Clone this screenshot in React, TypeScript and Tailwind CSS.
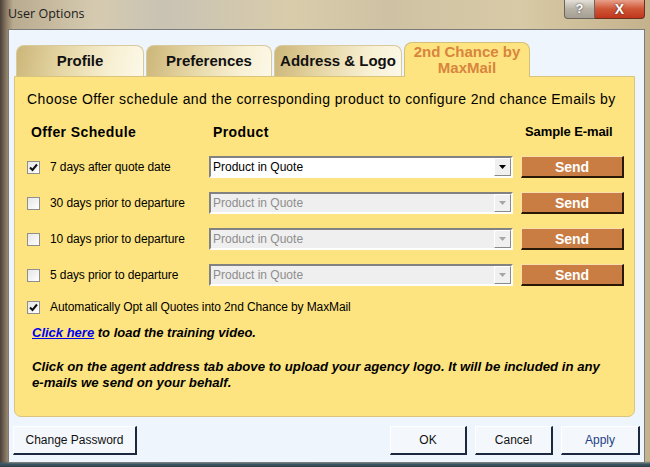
import React from 'react';

const font = "font-['Liberation_Sans',Arial,sans-serif]";

const CheckBox: React.FC<{ checked?: boolean }> = ({ checked }) => (
  <span className="w-[13px] h-[13px] border border-[#8e8f8f] bg-[linear-gradient(135deg,#e6e6e6,#ffffff)] flex items-center justify-center shrink-0">
    {checked && (
      <svg width="9" height="9" viewBox="0 0 9 9">
        <path d="M1 4.5 L3.5 7 L8 1.5" stroke="#111" strokeWidth="2" fill="none" />
      </svg>
    )}
  </span>
);

const ProductSelect: React.FC<{ disabled?: boolean }> = ({ disabled }) => (
  <div
    className={`w-[304px] h-[22px] flex items-center border-2 border-t-[#828282] border-l-[#828282] border-b-[#fdfdfd] border-r-[#fdfdfd] ${
      disabled ? 'bg-[#efefef] text-[#8d8d8d]' : 'bg-white text-black'
    }`}
  >
    <span className="flex-1 pl-[2px] text-[12px] leading-none">Product in Quote</span>
    <span className="w-[17px] h-[18px] flex items-center justify-center bg-[#f0f0f0] border border-t-[#ffffff] border-l-[#ffffff] border-b-[#8a8a8a] border-r-[#8a8a8a]">
      <svg width="7" height="4" viewBox="0 0 7 4">
        <path d="M0 0 H7 L3.5 4 Z" fill={disabled ? '#a6a6a6' : '#000'} />
      </svg>
    </span>
  </div>
);

const SendButton = () => (
  <button className="w-[103px] h-[22px] bg-[#c97d42] border-t border-l border-t-[#f9dfae] border-l-[#f9dfae] border-b-2 border-r-2 border-b-[#2a1806] border-r-[#2a1806] text-white font-bold text-[14px] leading-none">
    Send
  </button>
);

const rows = [
  { label: '7 days after quote date', checked: true },
  { label: '30 days prior to departure', checked: false },
  { label: '10 days prior to departure', checked: false },
  { label: '5 days prior to departure', checked: false },
];

const tabs = ['Profile', 'Preferences', 'Address & Logo'];

const WinButton: React.FC<{ label: string; width: string; blue?: boolean }> = ({ label, width, blue }) => (
  <button
    className={`${width} h-[29px] bg-[#f4f8fc] border-t border-l border-t-[#ffffff] border-l-[#ffffff] border-b-2 border-r-2 border-b-[#1b2840] border-r-[#1b2840] text-[12px] ${
      blue ? 'text-[#1f3f86]' : 'text-[#111]'
    }`}
  >
    {label}
  </button>
);

export default function App() {
  return (
    <div
      className={`w-[650px] h-[467px] flex flex-col ${font} bg-[linear-gradient(180deg,transparent_461px,#3d5866_464px,#2e3f48_467px),linear-gradient(90deg,#4a4038_0%,#8d7d66_1%,#b9ab8f_2%,#d6cbb1_15%,#c9c3b4_25%,#d9ccab_45%,#cfc2a4_60%,#d8caa6_80%,#c4b28c_100%)]`}
    >
      {/* title bar */}
      <div className="h-[29px] flex items-start justify-between pl-[8px] pr-[5px] shrink-0">
        <span className="mt-[5px] text-[12.5px] text-[#1b1b1b] font-['Open_Sans',sans-serif]">User Options</span>
        <div className="flex">
          <div className="w-[31px] h-[19px] rounded-bl-[4px] border border-t-0 border-[#6a645a] bg-[linear-gradient(180deg,#e4e0d8,#b8b2a6_50%,#a59f93)] flex items-center justify-center text-white font-bold text-[13px] [text-shadow:0_0_2px_#333]">
            ?
          </div>
          <div className="w-[50px] h-[19px] rounded-br-[4px] border border-t-0 border-l-0 border-[#6a3020] bg-[linear-gradient(180deg,#e8a08a,#cf5535_50%,#c0361c)] flex items-center justify-center text-white font-bold text-[14px] [text-shadow:0_0_2px_#422]">
            X
          </div>
        </div>
      </div>

      {/* client area */}
      <div className="ml-[8px] mr-[5px] mb-[4px] flex-1 flex flex-col bg-[#eef5fc] border border-[#7b7b7b]">
        {/* tabs */}
        <div className="flex items-end gap-[2px] ml-[7px] mt-[12px] relative z-10">
          {tabs.map((t, i) => (
            <div
              key={t}
              className={`${i === 1 ? 'w-[126px]' : 'w-[128px]'} h-[31px] rounded-t-[8px] border border-b-0 border-[#d8c99e] bg-[linear-gradient(100deg,#ccb679_0%,#e4d5a3_35%,#f8f0d4_75%,#fcf8e8_100%)] flex items-center justify-center font-bold text-[15px] text-[#111]`}
            >
              {t}
            </div>
          ))}
          <div className="w-[126px] h-[35px] -mb-[1px] rounded-t-[8px] border border-b-0 border-[#d4bf78] bg-[#fee480] flex flex-col items-center justify-center font-bold text-[15px] leading-[16px] text-[#d8853e]">
            <span>2nd Chance by</span>
            <span>MaxMail</span>
          </div>
        </div>

        {/* panel */}
        <div className="ml-[5px] mr-[9px] h-[341px] bg-[#fee480] border border-[#d8c47c] rounded-b-[7px] flex flex-col text-[13px] text-black">
          <div className="mt-[14px] ml-[12px] h-[16px] leading-[16px] text-[14px] tracking-[0.4px]">
            Choose Offer schedule and the corresponding product to configure 2nd chance Emails by
          </div>

          <div className="mt-[17px] flex items-center h-[16px] font-bold text-[14px]">
            <span className="ml-[16px] w-[182px] tracking-[0.4px]">Offer Schedule</span>
            <span className="w-[312px] tracking-[0.4px]">Product</span>
            <span className="text-[13px] tracking-[-0.1px]">Sample E-mail</span>
          </div>

          <div className="mt-[16px] flex flex-col gap-[14px]">
            {rows.map(r => (
              <div key={r.label} className="flex items-center h-[22px] pl-[12px]">
                <div className="w-[182px] flex items-center gap-[10px]">
                  <CheckBox checked={r.checked} />
                  <span className="text-[12px] tracking-[-0.1px]">{r.label}</span>
                </div>
                <ProductSelect disabled={!r.checked} />
                <div className="ml-[8px]">
                  <SendButton />
                </div>
              </div>
            ))}
          </div>

          <div className="mt-[13px] ml-[12px] h-[16px] flex items-center gap-[10px] text-[12px] tracking-[-0.1px]">
            <CheckBox checked />
            <span>Automatically Opt all Quotes into 2nd Chance by MaxMail</span>
          </div>

          <div className="mt-[10px] ml-[17px] h-[16px] leading-[16px] font-bold italic text-[13px]">
            <a href="#" className="text-[#0000ee] underline">Click here</a>
            <span> to load the training video.</span>
          </div>

          <p className="mt-[18px] ml-[17px] leading-[16px] font-bold italic text-[13.2px] whitespace-nowrap">
            Click on the agent address tab above to upload your agency logo. It will be included in any
            <br />
            e-mails we send on your behalf.
          </p>
        </div>

        {/* bottom buttons */}
        <div className="mt-[9px] ml-[4px] mr-[4px] flex items-center">
          <WinButton label="Change Password" width="w-[124px]" />
          <div className="flex-1" />
          <div className="flex gap-[8px]">
            <WinButton label="OK" width="w-[77px]" />
            <WinButton label="Cancel" width="w-[78px]" />
            <WinButton label="Apply" width="w-[79px]" blue />
          </div>
        </div>
      </div>
    </div>
  );
}
